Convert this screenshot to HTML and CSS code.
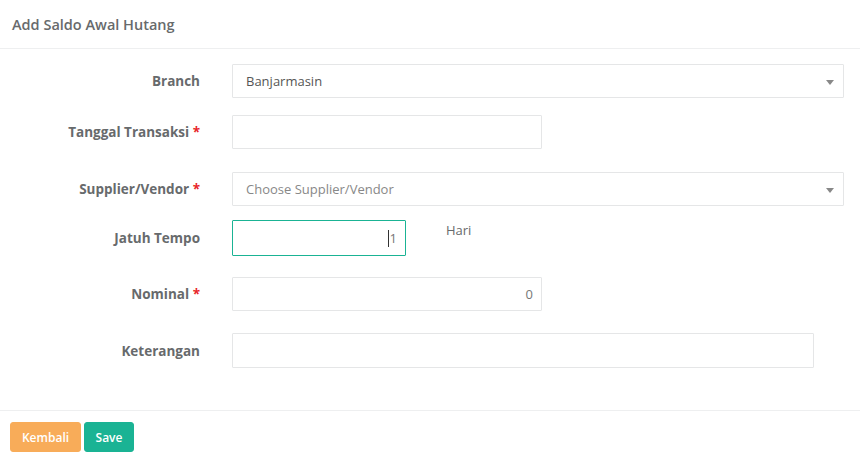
FILE: index.html
```html
<!DOCTYPE html>
<html>
<head>
<meta charset="utf-8">
<link rel="stylesheet" href="styles.css">
</head>
<body>
<div class="header"><h5 class="title">Add Saldo Awal Hutang</h5></div>
<div class="form">
  <div class="row r1">
    <label class="lbl">Branch</label>
    <div class="field select w612"><span class="val">Banjarmasin</span><span class="arrow"></span></div>
  </div>
  <div class="row r2">
    <label class="lbl">Tanggal Transaksi <span class="req">*</span></label>
    <div class="field w310"></div>
  </div>
  <div class="row r3">
    <label class="lbl">Supplier/Vendor <span class="req">*</span></label>
    <div class="field select w612"><span class="ph">Choose Supplier/Vendor</span><span class="arrow"></span></div>
  </div>
  <div class="row r4">
    <label class="lbl">Jatuh Tempo</label>
    <div class="field focus w174 right"><span class="caret"></span>1</div>
    <span class="hari">Hari</span>
  </div>
  <div class="row r5">
    <label class="lbl">Nominal <span class="req">*</span></label>
    <div class="field w310 right num">0</div>
  </div>
  <div class="row r6">
    <label class="lbl">Keterangan</label>
    <div class="field w582 h35"></div>
  </div>
</div>
<div class="footer">
  <button class="btn btn-warning">Kembali</button>
  <button class="btn btn-primary">Save</button>
</div>
</body>
</html>
```
FILE: styles.css
```css
* { box-sizing: border-box; }
body {
  margin: 0;
  background: #fff;
  font-family: "Open Sans", "Noto Sans", sans-serif;
  color: #676a6c;
  font-size: 13px;
}
.header {
  height: 49px;
  border-bottom: 1px solid #eeeff0;
  padding: 0 12px;
  display: flex;
  align-items: center;
}
.title {
  margin: 0;
  font-size: 14.5px;
  font-weight: 600;
  color: #676a6c;
}
.form {
  padding-top: 15px;
  padding-bottom: 42px;
}
.row {
  display: flex;
  align-items: center;
}
.r2 { margin-top: 17px; }
.r3 { margin-top: 23px; }
.r4 { margin-top: 14px; }
.r5 { margin-top: 21px; }
.r6 { margin-top: 22px; }
.lbl {
  width: 200px;
  margin-right: 32px;
  text-align: right;
  font-weight: 700;
  font-size: 13.5px;
  color: #676a6c;
}
.req { color: #e8262a; }
.field {
  height: 34px;
  border: 1px solid #e5e6e7;
  border-radius: 1px;
  background: #fff;
  display: flex;
  align-items: center;
  padding: 0 12px;
  font-size: 13px;
}
.h35 { height: 35px; }
.w612 { width: 612px; }
.w310 { width: 310px; }
.w174 { width: 174px; }
.w582 { width: 582px; }
.select { position: relative; padding-left: 13px; }
.val { color: #555; }
.ph { color: #888; }
.arrow {
  position: absolute;
  right: 9px;
  top: 15px;
  width: 0;
  height: 0;
  border-style: solid;
  border-width: 5px 4px 0 4px;
  border-color: #888 transparent transparent transparent;
}
.right { justify-content: flex-end; }
.focus {
  height: 36px;
  border-color: #1ab394;
  color: #777;
  padding-right: 8px;
}
.caret {
  display: inline-block;
  width: 1px;
  height: 17px;
  background: #333;
  margin-right: 1px;
}
.num { color: #777; padding-right: 8px; }
.hari {
  align-self: flex-start;
  margin-left: 40px;
  line-height: 20px;
  color: #676a6c;
}
.footer {
  border-top: 1px solid #eeeff0;
  padding: 11px 10px;
  display: flex;
  gap: 3px;
}
.btn {
  height: 30px;
  padding: 0 10px;
  border: 1px solid transparent;
  border-radius: 3px;
  font-family: "Open Sans", "Noto Sans", sans-serif;
  font-size: 12px;
  font-weight: 600;
  color: #fff;
}
.btn-warning { background: #f8ac59; border-color: #f8ac59; width: 71px; }
.btn-primary { background: #1ab394; border-color: #1ab394; width: 50px; }
```
